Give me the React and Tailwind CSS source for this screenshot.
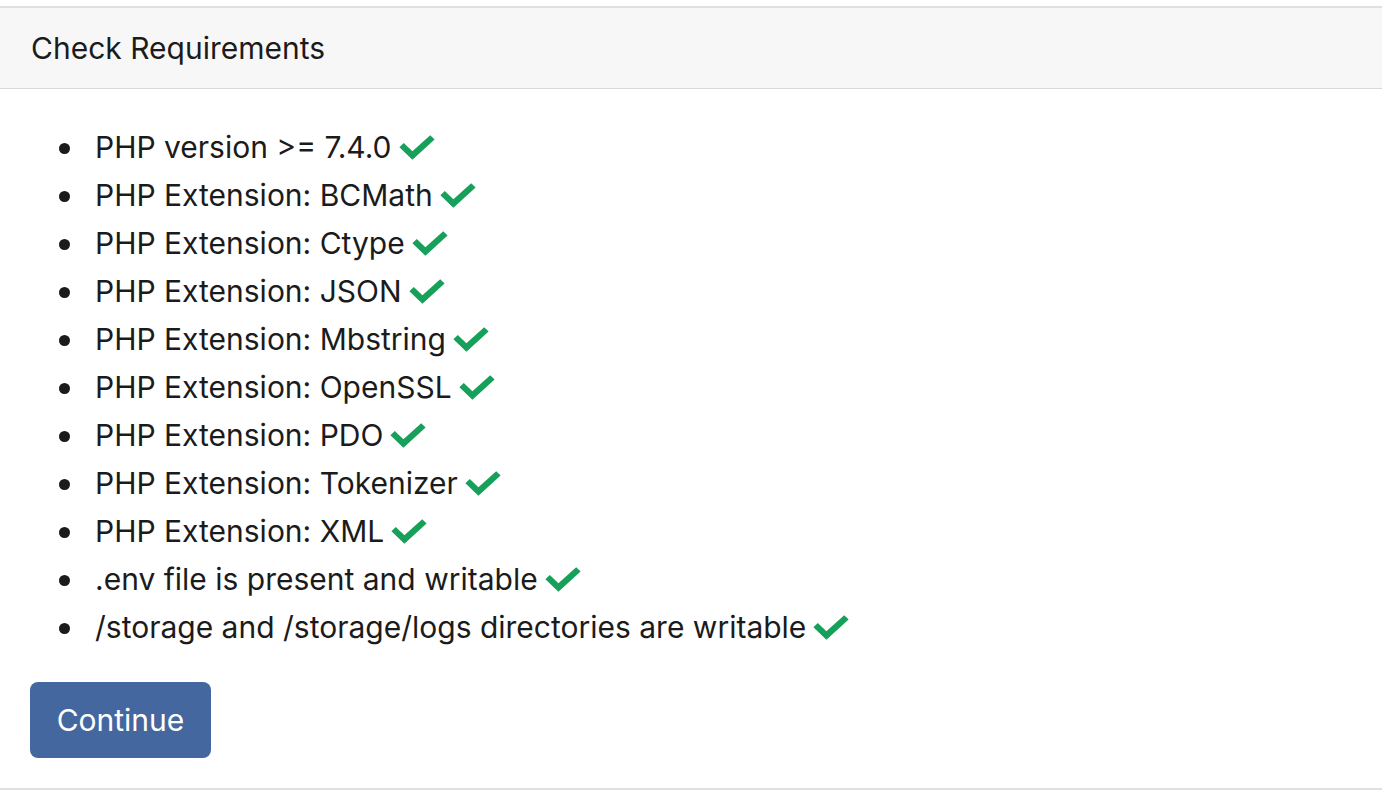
import React from "react";

const requirements = [
  "PHP version >= 7.4.0",
  "PHP Extension: BCMath",
  "PHP Extension: Ctype",
  "PHP Extension: JSON",
  "PHP Extension: Mbstring",
  "PHP Extension: OpenSSL",
  "PHP Extension: PDO",
  "PHP Extension: Tokenizer",
  "PHP Extension: XML",
  ".env file is present and writable",
  "/storage and /storage/logs directories are writable",
];

const Check = () => (
  <svg
    className="inline-block w-[36px] h-[25px] ml-[7px] text-[#16a05a]"
    viewBox="0 0 36 25"
    fill="currentColor"
  >
    <path d="M13.4 24.8 0.4 12.3 4.8 8 13.4 16.3 31.2 0.2 35.6 4.6Z" />
  </svg>
);

export default function App() {
  return (
    <div className="min-h-screen bg-white pt-[6px] font-['Inter',sans-serif] text-[#1b1b1b]">
      <div className="border-y-2 border-[#e0e0e0] bg-white">
        <div className="h-[81px] flex items-center px-[31px] bg-[#f7f7f7] border-b border-[#d9d9d9] text-[30px]">
          Check Requirements
        </div>
        <div className="px-[30px] pt-[34px] pb-[30px]">
          <ul className="pl-[29px] text-[30px] leading-[48px]">
            {requirements.map((r) => (
              <li key={r} className="flex items-center">
                <span className="w-[11px] h-[11px] rounded-full bg-[#1b1b1b] mr-[25px] mt-[2px] shrink-0" />
                <span>{r}</span>
                <Check />
              </li>
            ))}
          </ul>
          <button className="mt-[31px] w-[181px] h-[76px] rounded-[8px] bg-[#45679f] text-white text-[30px]">
            Continue
          </button>
        </div>
      </div>
    </div>
  );
}
